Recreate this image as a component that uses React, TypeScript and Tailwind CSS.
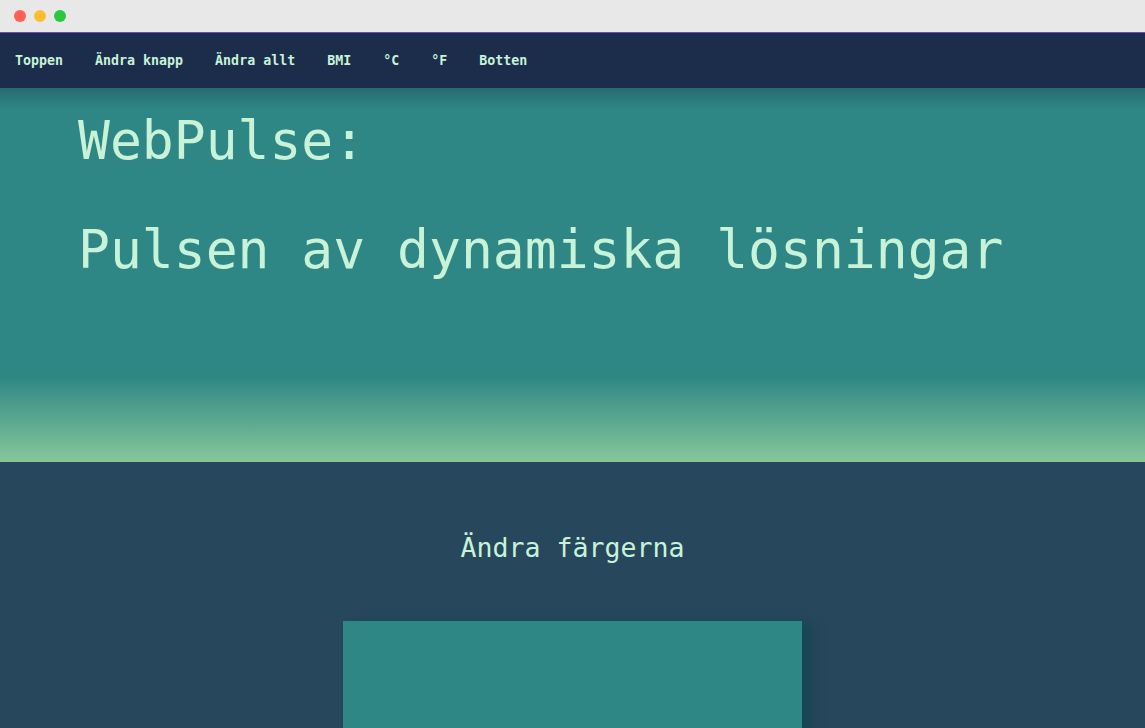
const mono = { fontFamily: '"DejaVu Sans Mono", "Liberation Mono", monospace' };

const links = ["Toppen", "Ändra knapp", "Ändra allt", "BMI", "°C", "°F", "Botten"];

export default function App() {
  return (
    <div className="h-[728px] w-[1145px] overflow-hidden bg-[#27475c]" style={mono}>
      {/* window chrome */}
      <div className="flex h-[33px] items-center gap-[8px] border-b border-[#6a4bc4] bg-[#e8e8e8] pl-[14px]">
        <span className="h-[12px] w-[12px] rounded-full bg-[#fe5f57]" />
        <span className="h-[12px] w-[12px] rounded-full bg-[#febc2e]" />
        <span className="h-[12px] w-[12px] rounded-full bg-[#28c840]" />
      </div>

      <nav className="flex h-[55px] items-center gap-[32px] bg-[#1b2d4b] px-[15px]">
        {links.map((l) => (
          <a key={l} className="text-[13.3px] font-bold text-[#c8f3d8]">
            {l}
          </a>
        ))}
      </nav>

      <header className="h-[374px] bg-[linear-gradient(to_bottom,#276b72_0px,#2e8785_22px,#2e8785_288px,#85c79a_100%)] pl-[78px] pt-[22px]">
        <h1 className="text-[53px] leading-[62px] text-[#c8f3d8]">WebPulse:</h1>
        <h1 className="mt-[47px] text-[53px] leading-[62px] text-[#c8f3d8]">Pulsen av dynamiska lösningar</h1>
      </header>

      <section className="flex flex-col items-center pt-[70px]">
        <h2 className="text-[26.6px] leading-[31px] text-[#c8f3d8]">Ändra färgerna</h2>
        <div className="mt-[58px] h-[200px] w-[459px] bg-[#2e8785] shadow-[12px_0_10px_-2px_rgba(20,70,80,0.8)]" />
      </section>
    </div>
  );
}
